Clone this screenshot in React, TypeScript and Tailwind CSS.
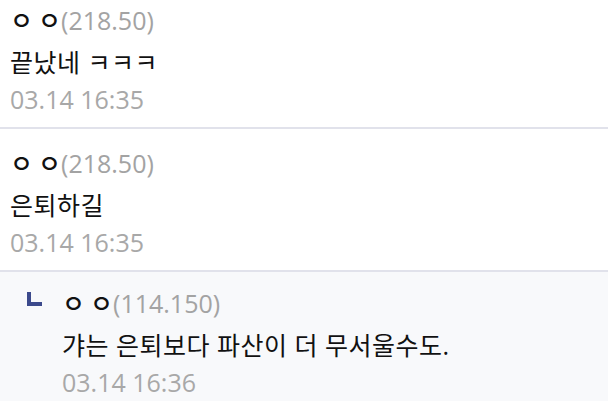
const font = { fontFamily: '"Open Sans", "Noto Sans CJK KR", sans-serif' };

type Comment = {
  name: string;
  ip: string;
  body: string;
  date: string;
  reply?: boolean;
};

const comments: Comment[] = [
  { name: "ㅇㅇ", ip: "(218.50)", body: "끝났네 ㅋㅋㅋ", date: "03.14 16:35" },
  { name: "ㅇㅇ", ip: "(218.50)", body: "은퇴하길", date: "03.14 16:35" },
  { name: "ㅇㅇ", ip: "(114.150)", body: "갸는 은퇴보다 파산이 더 무서울수도.", date: "03.14 16:36", reply: true },
];

function CommentBody({ c }: { c: Comment }) {
  return (
    <div className="flex flex-col">
      <div className="leading-[40px] text-[25px]">
        <span className="text-[#111] font-medium tracking-[5px] mr-[-5px]">{c.name}</span>
        <span className="text-[#a3a3a3]">{c.ip}</span>
      </div>
      <div className="leading-[44px] text-[25px] text-[#111] tracking-[0.5px]">{c.body}</div>
      <div className="leading-[30px] text-[25px] text-[#a8a8a8]">{c.date}</div>
    </div>
  );
}

export default function App() {
  return (
    <div className="w-[609px] h-[401px] overflow-hidden bg-white" style={font}>
      <div className="w-[608px] -mt-[14px]">
        {comments.map((c, i) =>
          c.reply ? (
            <div key={i} className="flex bg-[#f8f9fb] pt-[11px] pb-[11px] pl-[27px]">
              <div className="w-[15px] h-[14px] mt-[9px] border-l-4 border-b-4 border-[#3c4a8c]" />
              <div className="ml-[20px]">
                <CommentBody c={c} />
              </div>
            </div>
          ) : (
            <div key={i} className="px-[10px] pt-[14px] pb-[13px] border-b-2 border-[#e1e2eb]">
              <CommentBody c={c} />
            </div>
          )
        )}
      </div>
    </div>
  );
}
